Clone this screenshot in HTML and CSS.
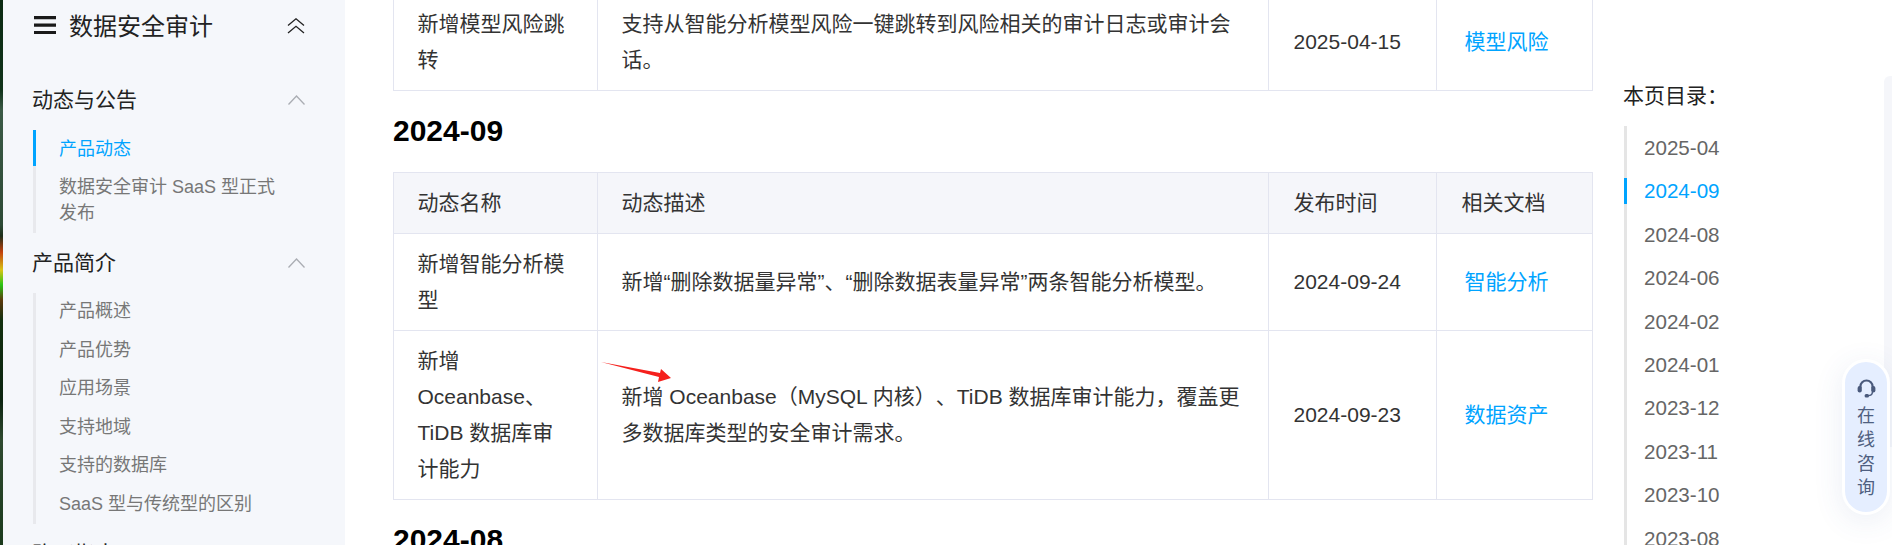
FILE: index.html
```html
<!DOCTYPE html>
<html lang="zh-CN">
<head>
  <meta charset="UTF-8">
  <title>产品动态 - 数据安全审计</title>
  <link rel="stylesheet" href="styles.css">
</head>
<body>

<div class="wallpaper"></div>

<!-- 左侧导航 -->
<nav class="sidebar">
  <div class="sidebar-title">
    <svg class="menu-icon" width="22" height="18" viewBox="0 0 22 18"><path d="M0 0h22v3.2H0zM0 7.6h22v3.2H0zM0 15h22v3.2H0z" fill="#1a1a1a"/></svg>
    <span class="sidebar-name">数据安全审计</span>
    <svg class="collapse-all" width="18" height="16" viewBox="0 0 18 16"><path d="M1 7.5 9 .8l8 6.7M1 15l8-6.7 8 6.7" fill="none" stroke="#222" stroke-width="1.3"/></svg>
  </div>

  <div class="nav-head">动态与公告
    <svg width="17" height="10" viewBox="0 0 17 10"><path d="M.5 9.5 8.5 1l8 8.5" fill="none" stroke="#aaadb3" stroke-width="1.3"/></svg>
  </div>
  <ul class="nav-list">
    <li class="active">产品动态</li>
    <li>数据安全审计 SaaS 型正式发布</li>
  </ul>

  <div class="nav-head">产品简介
    <svg width="17" height="10" viewBox="0 0 17 10"><path d="M.5 9.5 8.5 1l8 8.5" fill="none" stroke="#aaadb3" stroke-width="1.3"/></svg>
  </div>
  <ul class="nav-list">
    <li>产品概述</li>
    <li>产品优势</li>
    <li>应用场景</li>
    <li>支持地域</li>
    <li>支持的数据库</li>
    <li>SaaS 型与传统型的区别</li>
  </ul>

  <div class="nav-head">购买指南</div>
</nav>

<!-- 正文 -->
<main class="content">
  <table class="news-table first-table">
    <colgroup><col class="col-name"><col class="col-desc"><col class="col-date"><col class="col-doc"></colgroup>
    <tr>
      <td>新增模型风险跳转</td>
      <td>支持从智能分析模型风险一键跳转到风险相关的审计日志或审计会话。</td>
      <td class="cell-right">2025-04-15</td>
      <td class="cell-right"><a class="doc-link" href="#">模型风险</a></td>
    </tr>
  </table>

  <h2>2024-09</h2>
  <table class="news-table">
    <colgroup><col class="col-name"><col class="col-desc"><col class="col-date"><col class="col-doc"></colgroup>
    <tr class="head-row">
      <th>动态名称</th>
      <th>动态描述</th>
      <th class="cell-right">发布时间</th>
      <th class="cell-right">相关文档</th>
    </tr>
    <tr>
      <td>新增智能分析模型</td>
      <td>新增“删除数据量异常”、“删除数据表量异常”两条智能分析模型。</td>
      <td class="cell-right">2024-09-24</td>
      <td class="cell-right"><a class="doc-link" href="#">智能分析</a></td>
    </tr>
    <tr>
      <td>新增 Oceanbase、TiDB 数据库审计能力</td>
      <td class="arrow-cell">
        <svg class="red-arrow" width="71" height="21" viewBox="0 0 71 21"><path d="M0 0 59 11 60 7 70 16 57 20 58 15Z" fill="#f5201c"/></svg>
        新增 Oceanbase（MySQL 内核）、TiDB 数据库审计能力，覆盖更多数据库类型的安全审计需求。
      </td>
      <td class="cell-right">2024-09-23</td>
      <td class="cell-right"><a class="doc-link" href="#">数据资产</a></td>
    </tr>
  </table>

  <h2>2024-08</h2>
</main>

<!-- 本页目录 -->
<aside class="toc">
  <div class="toc-title">本页目录：</div>
  <ul class="toc-list">
    <li>2025-04</li>
    <li class="active">2024-09</li>
    <li>2024-08</li>
    <li>2024-06</li>
    <li>2024-02</li>
    <li>2024-01</li>
    <li>2023-12</li>
    <li>2023-11</li>
    <li>2023-10</li>
    <li>2023-08</li>
  </ul>
</aside>

<div class="side-strip"></div>

<div class="consult">
  <svg width="19" height="19" viewBox="0 0 19 19">
    <path d="M3.4 9V7.6a6.1 6.1 0 0 1 12.2 0V9" fill="none" stroke="#4a5a7c" stroke-width="2.2"/>
    <rect x=".6" y="7" width="4.2" height="6.6" rx="2" fill="#4a5a7c"/>
    <rect x="14.2" y="7" width="4.2" height="6.6" rx="2" fill="#4a5a7c"/>
    <path d="M15.4 13c0 2.6-1.8 3.6-4.4 3.6" fill="none" stroke="#4a5a7c" stroke-width="1.4"/>
    <rect x="7.6" y="15" width="4.4" height="3.4" rx="1.5" fill="#4a5a7c"/>
  </svg>
  <span class="consult-text">在线咨询</span>
</div>

</body>
</html>
```

FILE: styles.css
```css
* {
  box-sizing: border-box;
}
html, body {
  margin: 0;
  height: 545px;
  overflow: hidden;
}
body {
  display: flex;
  font-family: "Liberation Sans", "Noto Sans CJK SC", sans-serif;
  color: #333;
  background: #fff;
  text-spacing-trim: space-all;
}
ul {
  list-style: none;
  margin: 0;
  padding: 0;
}

/* 最左边露出的桌面壁纸 */
.wallpaper {
  flex: 0 0 3px;
  background: linear-gradient(180deg, #0b2a12 0, #10331a 90px, #3b5a46 110px, #2d4a36 225px, #1d2f1a 236px, #c2410c 252px, #d9c415 270px, #27c414 285px, #5c3a0c 300px, #12300f 320px, #0c2410 400px, #2f4a30 440px, #1b3a1c 545px);
}

/* 左侧导航 */
.sidebar {
  flex: 0 0 342px;
  padding-left: 29px;
  padding-right: 40px;
  background: #f5f7fb;
}
.sidebar-title {
  display: flex;
  align-items: center;
  height: 51px;
  padding-bottom: 2px;
  margin-bottom: 19px;
  color: #222;
}
.menu-icon {
  margin-left: 2px;
  margin-right: 13px;
}
.sidebar-name {
  flex: 1;
  font-size: 24px;
}
.collapse-all {
  margin-top: 2px;
}
.nav-head {
  display: flex;
  align-items: center;
  justify-content: space-between;
  height: 60px;
  padding-bottom: 4px;
  font-size: 21px;
  color: #222;
}
.nav-head svg {
  margin-top: 4px;
}
.nav-list {
  margin-left: 1px;
  border-left: 3px solid #e8e9ed;
}
.nav-list li {
  position: relative;
  padding: 6.5px 12px 6.5px 23px;
  font-size: 18px;
  line-height: 25.5px;
  color: #777;
}
.nav-list li.active {
  color: #00a4ff;
}
.nav-list li.active::before {
  content: "";
  position: absolute;
  left: -3px;
  top: 0;
  width: 3px;
  height: 36px;
  background: #00a4ff;
}

/* 正文表格 */
.content {
  flex: 0 0 1199px;
  margin-left: 48px;
}
h2 {
  margin: 25px 0 26px;
  font-size: 30px;
  line-height: 30px;
  font-weight: bold;
  color: #000;
}
.news-table {
  width: 1199px;
  table-layout: fixed;
  border-collapse: collapse;
  font-size: 21px;
  line-height: 36px;
}
.first-table {
  margin-top: -7px;
}
.col-name { width: 204px; }
.col-desc { width: 671px; }
.col-date { width: 168px; }
.col-doc { width: 156px; }
.news-table td, .news-table th {
  padding: 12px 24px 12px 23.5px;
  border: 1px solid #e3e5f0;
  font-weight: normal;
  text-align: left;
  vertical-align: middle;
}
.news-table .cell-right {
  padding-left: 24.5px;
  padding-right: 12px;
}
.head-row th {
  background: #f5f6fa;
}
.arrow-cell {
  position: relative;
}
.red-arrow {
  position: absolute;
  left: 3px;
  top: 31px;
}
.doc-link {
  padding-left: 3px;
  color: #00a4ff;
  text-decoration: none;
}

/* 本页目录 */
.toc {
  flex: 0 0 240px;
  margin-left: 31px;
  padding-top: 78px;
}
.toc-title {
  height: 48px;
  margin-left: -1px;
  font-size: 21px;
  line-height: 36px;
  color: #222;
}
.toc-list {
  border-left: 3px solid #e5e5e5;
}
.toc-list li {
  position: relative;
  height: 43.4px;
  padding-left: 17px;
  font-size: 20.6px;
  line-height: 43.4px;
  color: #666;
}
.toc-list li.active {
  color: #00a4ff;
}
.toc-list li.active::before {
  content: "";
  position: absolute;
  left: -3px;
  top: 9px;
  width: 3px;
  height: 26px;
  background: #00a4ff;
}

/* 右边浮动按钮 */
.side-strip {
  position: absolute;
  right: 0;
  top: 76px;
  width: 8px;
  height: 371px;
  border-radius: 6px 0 0 6px;
  background: #f5f6fa;
}
.consult {
  position: absolute;
  left: 1842px;
  top: 359px;
  width: 48px;
  height: 156px;
  padding-top: 17px;
  border: 3px solid #fff;
  border-radius: 24px;
  background: #e5eeff;
  box-shadow: 0 6px 30px rgba(60, 90, 160, 0.1);
  color: #4f5f80;
  display: flex;
  flex-direction: column;
  align-items: center;
}
.consult-text {
  width: 18px;
  margin-top: 6px;
  font-size: 18px;
  line-height: 24px;
}
```
